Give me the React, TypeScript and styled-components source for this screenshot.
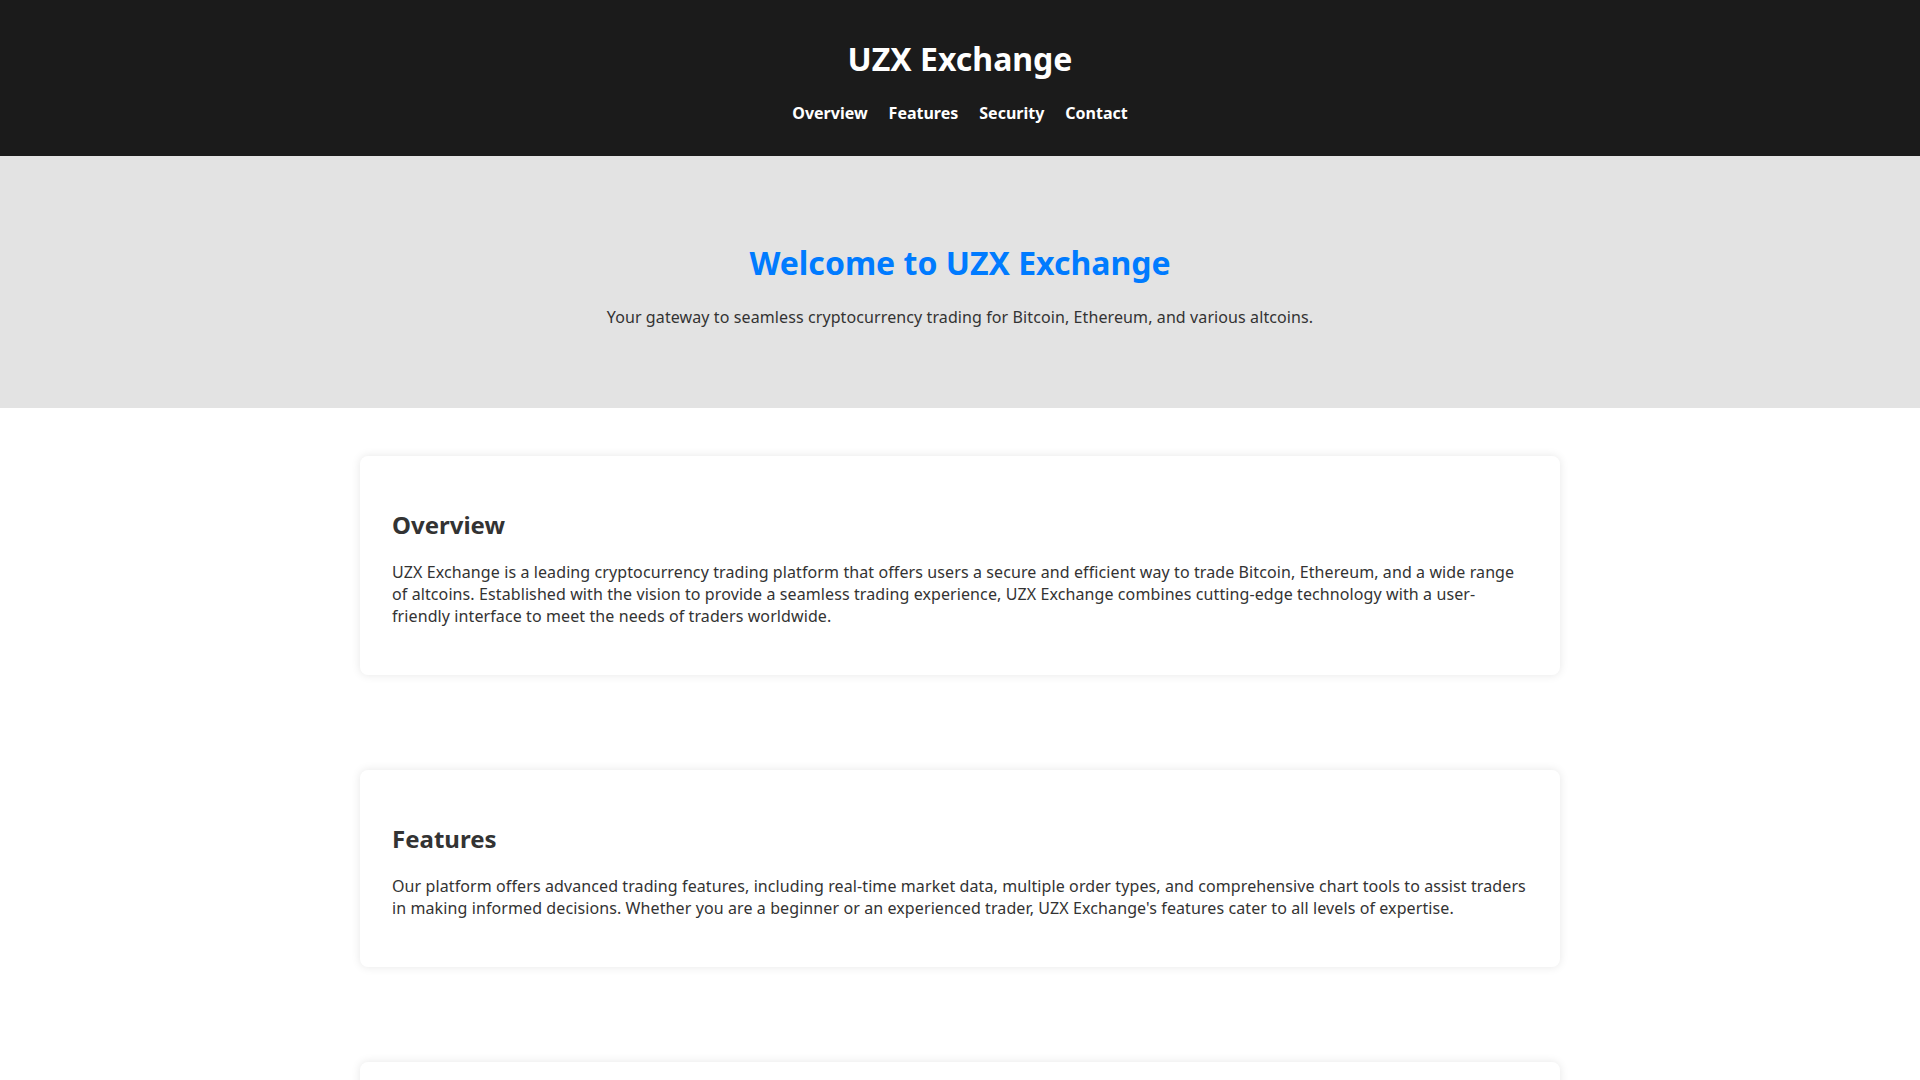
import React from "react";
import styled, { createGlobalStyle } from "styled-components";

const GlobalStyle = createGlobalStyle`
  html, body {
    margin: 0;
    padding: 0;
    background: #ffffff;
    font-family: "Noto Sans", "Open Sans", "Liberation Sans", sans-serif;
    color: #333333;
  }
  * { box-sizing: border-box; }
`;

const Header = styled.header`
  background: #1b1b1b;
  color: #ffffff;
  text-align: center;
  padding: 16px;
`;

const Brand = styled.h1`
  margin: 21px 0 22px;
  font-size: 32px;
  font-weight: 700;
  line-height: normal;
`;

const Nav = styled.nav`
  display: flex;
  justify-content: center;
  gap: 21px;
  margin: 0 0 16px;
`;

const NavLink = styled.a`
  color: #ffffff;
  text-decoration: none;
  font-weight: 700;
  font-size: 16px;
  line-height: normal;
`;

const Hero = styled.section`
  background: #e3e3e3;
  text-align: center;
  padding: 64px 20px;
`;

const HeroTitle = styled.h2`
  margin: 21px 0 22px;
  color: #007bff;
  font-size: 32px;
  font-weight: 700;
  line-height: normal;
`;

const HeroText = styled.p`
  margin: 0 0 16px;
  font-size: 16px;
  line-height: normal;
  letter-spacing: 0.1px;
  color: #333333;
`;

const Main = styled.main`
  max-width: 1200px;
  margin: 0 auto;
  padding: 48px 0;
  display: flex;
  flex-direction: column;
  gap: 95px;
`;

const Card = styled.section`
  background: #ffffff;
  border-radius: 8px;
  box-shadow: 0 0 10px rgba(0, 0, 0, 0.1);
  padding: 32px;
`;

const CardTitle = styled.h2`
  margin: 20px 0;
  font-size: 24px;
  font-weight: 700;
  line-height: normal;
  color: #333333;
`;

const CardText = styled.p`
  margin: 0 0 16px;
  font-size: 16px;
  line-height: normal;
  letter-spacing: 0.1px;
  color: #333333;
`;

const sections = [
  {
    id: "overview",
    title: "Overview",
    text: "UZX Exchange is a leading cryptocurrency trading platform that offers users a secure and efficient way to trade Bitcoin, Ethereum, and a wide range of altcoins. Established with the vision to provide a seamless trading experience, UZX Exchange combines cutting-edge technology with a user-friendly interface to meet the needs of traders worldwide.",
  },
  {
    id: "features",
    title: "Features",
    text: "Our platform offers advanced trading features, including real-time market data, multiple order types, and comprehensive chart tools to assist traders in making informed decisions. Whether you are a beginner or an experienced trader, UZX Exchange's features cater to all levels of expertise.",
  },
  {
    id: "security",
    title: "Security",
    text: "Security is our top priority. UZX Exchange employs industry-leading security measures, including cold storage for the majority of funds, two-factor authentication, and regular security audits to keep your assets safe.",
  },
  {
    id: "contact",
    title: "Contact",
    text: "Have questions or need assistance? Our support team is available 24/7 to help you with any inquiries related to your account or trading activities.",
  },
];

export default function App() {
  return (
    <>
      <GlobalStyle />
      <Header>
        <Brand>UZX Exchange</Brand>
        <Nav>
          <NavLink href="#overview">Overview</NavLink>
          <NavLink href="#features">Features</NavLink>
          <NavLink href="#security">Security</NavLink>
          <NavLink href="#contact">Contact</NavLink>
        </Nav>
      </Header>
      <Hero>
        <HeroTitle>Welcome to UZX Exchange</HeroTitle>
        <HeroText>
          Your gateway to seamless cryptocurrency trading for Bitcoin, Ethereum, and various altcoins.
        </HeroText>
      </Hero>
      <Main>
        {sections.map((s) => (
          <Card key={s.id} id={s.id}>
            <CardTitle>{s.title}</CardTitle>
            <CardText>{s.text}</CardText>
          </Card>
        ))}
      </Main>
    </>
  );
}
